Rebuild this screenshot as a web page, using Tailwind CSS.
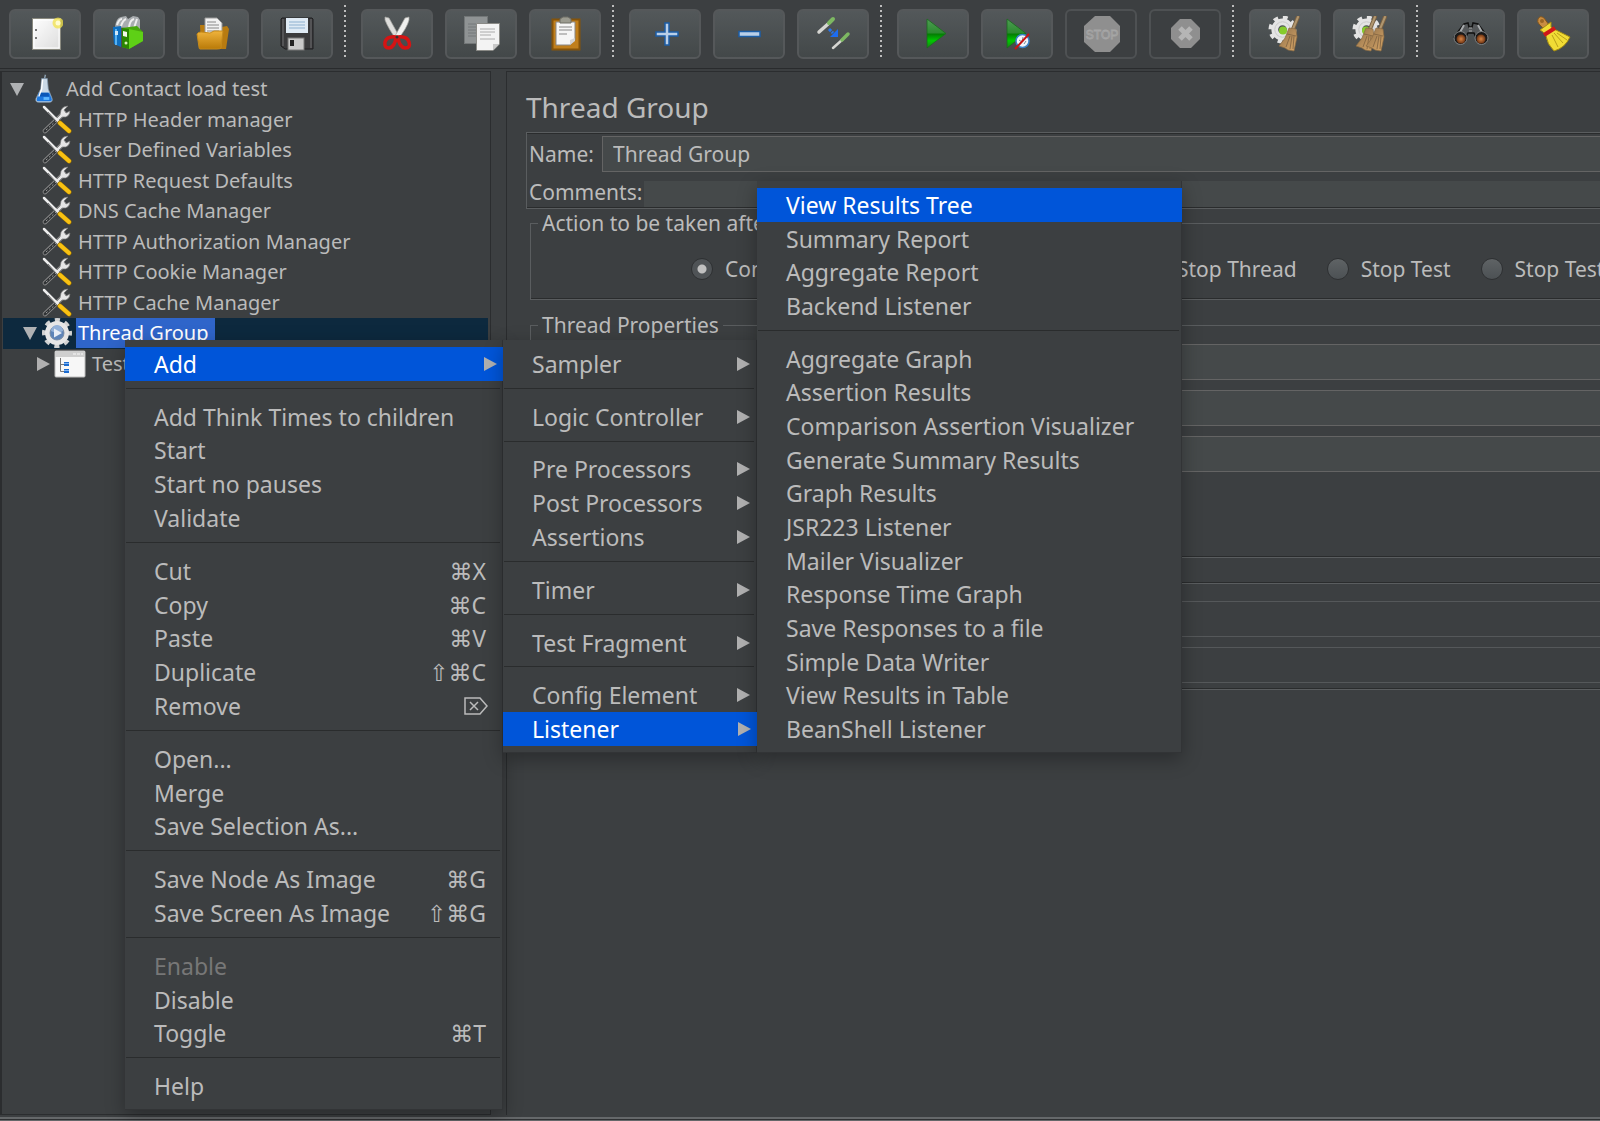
<!DOCTYPE html>
<html lang="en">
<head>
    <meta charset="UTF-8">
    <title>Add Contact load test</title>
    <meta name="viewport" content="width=device-width, initial-scale=1.0" />
    <script src="https://cdn.jsdelivr.net/npm/@tailwindcss/browser@4"></script>
</head>
<body class="relative flex flex-col h-screen overflow-hidden bg-[#3c3f41] text-[#bbbbbb] font-['Noto_Sans','DejaVu_Sans',sans-serif]">

    <!-- shared drawings -->
    <svg class="absolute w-0 h-0">
        <defs>
            <linearGradient id="paper" x1="0" y1="0" x2="1" y2="1"><stop offset="0" stop-color="#fff"/><stop offset="1" stop-color="#dcdcdc"/></linearGradient>
            <linearGradient id="orange" x1="0" y1="0" x2="0" y2="1"><stop offset="0" stop-color="#efb33c"/><stop offset="1" stop-color="#b97a08"/></linearGradient>
            <linearGradient id="green" x1="0" y1="0" x2="0" y2="1"><stop offset="0" stop-color="#4f9e55"/><stop offset=".48" stop-color="#2c8a2f"/><stop offset=".52" stop-color="#047d04"/><stop offset=".75" stop-color="#00c800"/><stop offset="1" stop-color="#1b7d1b"/></linearGradient>
            <linearGradient id="straw" x1="0" y1="0" x2="1" y2="1"><stop offset="0" stop-color="#8f6f4a"/><stop offset="1" stop-color="#d9a868"/></linearGradient>
            <radialGradient id="lens"><stop offset="0" stop-color="#d98645"/><stop offset="1" stop-color="#6d3312"/></radialGradient>
            <symbol id="gear" viewBox="0 0 30 30">
                <circle cx="15" cy="15" r="12" fill="none" stroke="#e4e4e4" stroke-width="5" stroke-dasharray="4.7 4.725"/>
                <circle cx="15" cy="15" r="8" fill="none" stroke="#e4e4e4" stroke-width="7"/>
                <circle cx="15" cy="15" r="8" fill="none" stroke="#c9c9c9" stroke-width="1"/>
            </symbol>
            <symbol id="whisk" viewBox="0 0 22 36">
                <path d="M20 1L15 13" stroke="#7a6142" stroke-width="4" stroke-linecap="round"/>
                <path d="M20 1L15 13" stroke="#b0966f" stroke-width="2" stroke-linecap="round"/>
                <path d="M11 12L18 13L19 21L16 35L10 34L7 32L1 30L7 22Z" fill="url(#straw)" stroke="#8a6a42" stroke-width=".7"/>
                <path d="M9 18L18 20M12 20L8 31M14 20L12 33M16 20L15 33" stroke="#7d6140" stroke-width=".8" fill="none"/>
            </symbol>
            <symbol id="tools" viewBox="0 0 30 30">
                <path d="M3 26L22 8" stroke="#8b8b8b" stroke-width="4.500" stroke-linecap="round"/>
                <path d="M3 26L17 13" stroke="#303335" stroke-width="3" stroke-linecap="round"/>
                <path d="M4 25L14 16" stroke="#9a9a9a" stroke-width="1" stroke-dasharray="2 2"/>
                <path d="M18 10L19 5Q21 1 26 1L22 5L24 8L28 6Q28 10 24 12L20 12L16 16L14 14Z" fill="#e6e6e6" stroke="#777" stroke-width=".7"/>
                <path d="M2 2L16 16" stroke="#eeeeee" stroke-width="2.500" stroke-linecap="round"/>
                <path d="M6 7L14 16" stroke="#777" stroke-width="1"/>
                <path d="M18 18L27 26" stroke="#9c7200" stroke-width="5" stroke-linecap="round"/>
                <path d="M18 18L27 26" stroke="#f8c112" stroke-width="4" stroke-linecap="round"/>
            </symbol>
            <symbol id="flask" viewBox="0 0 20 30">
                <path d="M11 0L10 4" stroke="#8ba0b0" stroke-width="1.500"/>
                <path d="M7 4H13L14 15L18 25Q19 29 15 29H4Q0 29 1 25L6 15Z" fill="#c9d8e6" stroke="#7c93a8" stroke-width=".8"/>
                <path d="M4 19H15L17.500 25Q18.500 28 15 28H4Q1 28 2 25Z" fill="#1c78e0"/>
                <path d="M5 19H14L15 23H4Z" fill="#0a57b8"/>
                <path d="M8 5L7 15L4 23" stroke="#fff" stroke-width="1.500" fill="none"/>
                <path d="M9 25H15" stroke="#5db7ff" stroke-width="3"/>
            </symbol>
            <symbol id="threads" viewBox="0 0 30 30">
                <circle cx="15" cy="15" r="12.500" fill="none" stroke="#d2d2d2" stroke-width="5" stroke-dasharray="4.9 4.917" stroke-dashoffset="2.450"/>
                <circle cx="15" cy="15" r="9.500" fill="none" stroke="#e6e6e6" stroke-width="5"/>
                <circle cx="15" cy="15" r="7" fill="#5d84b8" stroke="#8194ad"/>
                <path d="M9 13A6 6 0 0 1 21 13Q15 16 9 13" fill="#93b1d8"/>
                <path d="M12 10.500L20 15L12 19.500Z" fill="#e8eef6"/>
            </symbol>
            <symbol id="plan" viewBox="0 0 32 30">
                <rect x="1" y="2" width="30" height="26" rx="1" fill="#f7f7f7" stroke="#bdbdbd"/>
                <path d="M1 2H31V8H1Z" fill="#cfcfcf"/>
                <path d="M19 5H22M23 5H26M27 5H29" stroke="#e4e4e4" stroke-width="2"/>
                <path d="M6.500 9V22.500H10M6.500 15.500H10" stroke="#777" fill="none"/>
                <path d="M10 13H15V17H10ZM10 20H15V24H10Z" fill="#1d6cd0"/>
                <path d="M10 14.500H15M10 21.500H15" stroke="#7fb4f3"/>
            </symbol>
        </defs>
    </svg>

    <!-- toolbar -->
    <header id="toolbar" class="flex shrink-0 items-start h-[69px] pl-[9px] pt-[9px] border-b border-[#292b2d]">
        <div class="group flex gap-3">
            <button aria-label="New"><svg viewBox="0 0 36 36"><rect x="5.500" y="2.500" width="28" height="31" fill="url(#paper)" stroke="#8a8a80"/><rect x="7" y="4" width="25" height="28" fill="none" stroke="#fff"/><path d="M8 14h2M8 22h2" stroke="#777" stroke-width="2"/><circle cx="31" cy="7" r="5.500" fill="#f3e34a" fill-opacity=".75"/><circle cx="31" cy="7" r="2.500" fill="#fffcd0"/></svg></button>
            <button aria-label="Templates"><svg viewBox="0 0 36 36"><path d="M4 11Q5 2 10 1L15 0L17 3L22 0L27 1L29 4V14L15 12Z" fill="#a9adb0"/><path d="M6 9Q8 3 11 3M10 10Q12 4 15 3M18 11Q19 4 23 3M23 12L26 3" stroke="#eee" stroke-width="2" fill="none"/><path d="M2 11L10 10V31L3 28Q2 20 2 11Z" fill="#0f6fc0"/><path d="M5 13V29" stroke="#58b2f2" stroke-width="2"/><path d="M4 15H7V19H4Z" fill="#cfe8fa"/><path d="M11 12L26 10L32 16V25L18 33L11 31Z" fill="#47a80c"/><path d="M11 12L18 13V33L11 31Z" fill="#2b8600"/><path d="M18 13L32 16V25L18 33Z" fill="#5ed016"/><path d="M12 15L16 16V21L12 20Z" fill="#f3f8ea"/><circle cx="15" cy="27" r="1.500" fill="#d9f3bb"/></svg></button>
            <button aria-label="Open"><svg viewBox="0 0 36 36"><path d="M5 9H13L16 13L32 10L34 13L31 33H6Z" fill="#b87b10"/><path d="M10 2H22L27 7V20H10Z" fill="#f2f2f2" stroke="#999"/><path d="M12 6H21M12 9H24M12 12H24M12 15H24" stroke="#888"/><path d="M2 18Q3 16 6 16L15 17L19 15H28L26 32Q25 33 22 33H5Q4 33 4 31Z" fill="url(#orange)" stroke="#c58a1b"/></svg></button>
            <button aria-label="Save"><svg viewBox="0 0 36 36"><path d="M3 2H33L34 3V33H6L2 30V3Z" fill="#3a3a3c" stroke="#1f1f20"/><path d="M4 3V30M32 3V32" stroke="#6e6e70"/><rect x="7" y="2" width="22" height="15" fill="#dfeaf4"/><path d="M10 6H26M10 9H26M10 12H26" stroke="#8db0cf"/><rect x="9" y="22" width="16" height="12" fill="#c9c9c9" stroke="#777"/><rect x="11" y="24" width="4" height="6" fill="#222"/></svg></button>
        </div>
        <i></i>
        <div class="group flex gap-3">
            <button aria-label="Cut"><svg viewBox="0 0 36 36"><path d="M6 1L10 2L20 20L17 23Q9 12 6 4Z" fill="#dededc" stroke="#a5a5a0" stroke-width=".7"/><path d="M30 1L26 2L16 20L19 23Q28 12 30 4Z" fill="#f0f0ee" stroke="#a5a5a0" stroke-width=".7"/><path d="M17 21Q8 20 6 26Q5 32 10 32Q16 31 17 21ZM19 21Q28 20 30 26Q32 32 26 32Q20 31 19 21Z" fill="none" stroke="#d41414" stroke-width="3.500"/><circle cx="18" cy="21" r="1.500" fill="#333"/></svg></button>
            <button aria-label="Copy"><svg viewBox="0 0 36 36" overflow="visible"><rect x="1.500" y=".5" width="23" height="27" fill="#8f9394" stroke="#737778"/><path d="M5 8H20M5 11H20M5 14H20M5 17H20M5 20H20" stroke="#74787a"/><path d="M13.500 7.500H36.500V28L30 34.500H13.500Z" fill="#f3f3f3" stroke="#8a8a86"/><path d="M17 13H32M17 16H32M17 19H28M17 23H32" stroke="#aaa"/><path d="M30 34V28H36Z" fill="#c8c8c8"/></svg></button>
            <button aria-label="Paste"><svg viewBox="0 0 36 36"><rect x="5.500" y="3.500" width="27" height="30" fill="#c07f1c" stroke="#85540b" stroke-width="2"/><path d="M9 6H28V24L23 29H9Z" fill="#f6f6f6" stroke="#888"/><path d="M12 11H25M12 14H25M12 18H20" stroke="#888"/><path d="M23 29V24L28 22V25Z" fill="#d3d3d3"/><path d="M13 7V3L16 1H21L24 3V7Z" fill="#9b9b90" stroke="#6e6e66"/></svg></button>
        </div>
        <i></i>
        <div class="group flex gap-3">
            <button aria-label="Expand All"><svg viewBox="0 0 36 36"><path d="M18 7H22V16H31V20H22V29H18V20H9V16H18Z" fill="#b9cfe8" stroke="#1c5ea6" stroke-width="1.500"/></svg></button>
            <button aria-label="Collapse All"><svg viewBox="0 0 36 36"><rect x="8" y="15.500" width="21" height="5" fill="#b9cfe8" stroke="#1c5ea6" stroke-width="1.500"/></svg></button>
            <button aria-label="Toggle"><svg viewBox="0 0 36 36"><path d="M4 16L13 8" stroke="#d6d6d2" stroke-width="3.500" stroke-linecap="round"/><path d="M14 7L18 3" stroke="#7db862" stroke-width="4" stroke-linecap="round"/><path d="M18 32L27 24" stroke="#d6d6d2" stroke-width="2.500" stroke-linecap="round"/><path d="M27 24L33 18" stroke="#7db862" stroke-width="3.500" stroke-linecap="round"/><path d="M14 13L18 17" stroke="#2a74e8" stroke-width="3" stroke-dasharray="3 1"/><path d="M23 13V21H15Z" fill="#1d6cf0"/></svg></button>
        </div>
        <i></i>
        <div class="group flex gap-3">
            <button aria-label="Start"><svg viewBox="0 0 36 36"><path d="M12 3L31 17.500L12 32Z" fill="url(#green)" stroke="#1b6b1d" stroke-width=".8"/></svg></button>
            <button aria-label="Start no pauses"><svg viewBox="0 0 36 36"><path d="M8 3L27 17.500L8 32Z" fill="url(#green)" stroke="#1b6b1d" stroke-width=".8"/><circle cx="23.500" cy="25" r="6.500" fill="#f2f5fa" stroke="#3b82c8" stroke-width="1.500"/><path d="M20 24L23 26L24 21M25 28L27 25" stroke="#7d8792" fill="none"/><path d="M16 33L30 18" stroke="#c81414" stroke-width="2"/></svg></button>
            <button aria-label="Stop" disabled><svg viewBox="0 0 36 36" overflow="visible"><path d="M12 0H27L37 10V26L27 36H12L1 26V10Z" fill="#8f8f8f"/><text x="19" y="23" text-anchor="middle" font-family="Liberation Sans" font-size="12" fill="#8f8f8f" stroke="#a6a6a6" stroke-width=".8">STOP</text></svg></button>
            <button aria-label="Shutdown" disabled><svg viewBox="0 0 36 36"><path d="M13 3H24L33 12V23L24 32H13L4 23V12Z" fill="#8f8f8f"/><path d="M13 12L24 23M24 12L13 23" stroke="#b5b5b5" stroke-width="5"/></svg></button>
        </div>
        <i></i>
        <div class="group flex gap-3">
            <button aria-label="Clear"><svg viewBox="0 0 36 36"><use href="#gear" x="1" y="-1" width="29" height="29"/><circle cx="16" cy="14.500" r="4" fill="#86cc2c"/><use href="#whisk" x="11" y="0" width="22" height="36"/></svg></button>
            <button aria-label="Clear All"><svg viewBox="0 0 36 36"><use href="#gear" x="1" y="-1" width="29" height="29"/><circle cx="15" cy="14.500" r="4" fill="#86cc2c"/><use href="#whisk" x="4" y="0" width="22" height="36"/><use href="#whisk" x="14" y="0" width="22" height="36"/></svg></button>
        </div>
        <i></i>
        <div class="group flex gap-3">
            <button aria-label="Search"><svg viewBox="0 0 36 36" overflow="visible"><path d="M13 8L17 7L18 11H21L22 7L27 8L36 20L26 24L23 17H17L13 24L3 21Z" fill="#55585a" stroke="#111" stroke-width="1.500"/><path d="M13 9L8 18M27 9L32 18" stroke="#a8abad" stroke-width="2"/><path d="M18 12H21M18 15H21" stroke="#aaa"/><circle cx="9.500" cy="22" r="6.500" fill="#1a1a1a" stroke="#808385"/><circle cx="30.500" cy="22" r="6.500" fill="#1a1a1a" stroke="#808385"/><circle cx="10" cy="23" r="4.500" fill="url(#lens)"/><circle cx="30" cy="23" r="4.500" fill="url(#lens)"/></svg></button>
            <button aria-label="Reset Search"><svg viewBox="0 0 36 36" overflow="visible"><path d="M3 3Q5 -1 9 2L14 9L9 13L4 8Q2 6 3 3Z" fill="#c98d42" stroke="#87571c"/><circle cx="7" cy="5" r="2" fill="#9a6524"/><path d="M5 14L16 6V11L19 13L35 21Q30 32 19 35Q12 28 11 20L8 16Z" fill="#f1dc35" stroke="#a38b11"/><path d="M19 17L28 27M17 19L23 31M22 17L32 24" stroke="#b9a01a"/><path d="M9 19L20 12" stroke="#d01818" stroke-width="4"/></svg></button>
        </div>
    </header>

    <main class="flex flex-1 gap-[15px] min-h-0 pt-[2px] pb-[6px]">
        <!-- test plan tree -->
        <nav class="w-[491px] shrink-0 border border-l-2 border-[#2b2d2f] pl-px pr-[2px] pt-[2px]">
            <ul id="tree" role="tree" class="grid auto-rows-fr h-[305px] text-[20px] leading-[30px]"></ul>
        </nav>

        <!-- element settings -->
        <section class="flex-1 min-w-0 overflow-hidden border-t border-l border-[#2b2d2f] pl-[19px] text-[21px] leading-[30px] whitespace-nowrap">
            <h1 class="mt-[15px] text-[28px] leading-[40px]">Thread Group</h1>
            <div class="mt-[5px] border border-r-0 border-[#5a5d5f] shadow-[inset_0_-1px_0_#2a2c2d,inset_0_1px_0_#2a2c2d] pl-[2px] pt-[3px]">
                <div class="flex items-center">
                    <label for="name" class="w-[73px]">Name:</label>
                    <input id="name" value="Thread Group" class="flex-1 min-w-0 h-[36px] pl-[10px] bg-[#45494a] border border-r-0 border-[#646464]">
                </div>
                <div class="flex items-end h-[36px] pb-px">
                    <label for="comments" class="w-[115px]">Comments:</label>
                    <input id="comments" class="flex-1 min-w-0 h-[26px] bg-[#45494a]">
                </div>
            </div>
            <fieldset class="ml-1 h-[91px] border border-r-0 border-[#5a5d5f] shadow-[inset_0_-1px_0_#2a2c2d] pl-[160px]">
                <legend class="-ml-[153px] px-1 leading-[28px]">Action to be taken after a Sampler error</legend>
                <div class="flex gap-[30px] pt-[17px]">
                    <label class="flex items-center gap-3 w-[130px]"><input type="radio" name="act" checked>Continue</label>
                    <div class="flex items-center w-[262px]"><input type="radio" name="act" aria-label="Start Next Thread Loop"></div>
                    <label class="flex items-center gap-3"><input type="radio" name="act">Stop Thread</label>
                    <label class="flex items-center gap-3"><input type="radio" name="act">Stop Test</label>
                    <label class="flex items-center gap-3"><input type="radio" name="act">Stop Test Now</label>
                </div>
            </fieldset>
            <fieldset class="mt-[11px] ml-1 border-t border-l border-[#5a5d5f]">
                <legend class="ml-[7px] px-1 leading-[28px]">Thread Properties</legend>
                <div class="grid gap-[10px] pt-[5px] pl-[300px]">
                    <input aria-label="Number of Threads (users)" class="min-w-0 h-[36px] bg-[#45494a] border border-r-0 border-[#646464]">
                    <input aria-label="Ramp-Up Period (in seconds)" class="min-w-0 h-[36px] bg-[#45494a] border border-r-0 border-[#646464]">
                    <input aria-label="Loop Count" class="min-w-0 h-[36px] bg-[#45494a] border border-r-0 border-[#646464]">
                </div>
                <div class="h-[86px] border-b border-[#5a5d5f] shadow-[inset_0_-1px_0_#2a2c2d]"></div>
                <!-- scheduler -->
                <div class="mt-[25px] grid gap-[10px] pt-[17px] pl-[300px] pb-[6px] border border-r-0 border-[#5a5d5f] shadow-[0_-1px_0_#2a2c2d,inset_0_-1px_0_#2a2c2d]">
                    <input aria-label="Duration (seconds)" disabled class="min-w-0 h-[36px] border border-r-0 border-[#55585a]">
                    <input aria-label="Startup delay (seconds)" disabled class="min-w-0 h-[36px] border border-r-0 border-[#55585a]">
                </div>
            </fieldset>
        </section>
    </main>
    <div class="absolute bottom-0 inset-x-0 h-1 border-t-2 border-b border-[#65686a] bg-[#2f3133]"></div>

    <!-- popup menus -->
    <div id="popup" role="menu" class="absolute left-[125px] top-[340px] w-[378px] h-[770px]"></div>
    <div id="add" role="menu" class="absolute left-[503px] top-[340px] w-[254px] h-[413px]"></div>
    <div id="listener" role="menu" class="absolute left-[757px] top-[181px] w-[425px] h-[572px]"></div>

</body>
<script>

    const tree = [
        [0, 'flask', 'Add Contact load test', 'open'],
        [1, 'tools', 'HTTP Header manager'],
        [1, 'tools', 'User Defined Variables'],
        [1, 'tools', 'HTTP Request Defaults'],
        [1, 'tools', 'DNS Cache Manager'],
        [1, 'tools', 'HTTP Authorization Manager'],
        [1, 'tools', 'HTTP Cookie Manager'],
        [1, 'tools', 'HTTP Cache Manager'],
        [1, 'threads', 'Thread Group', 'open'],
        [2, 'plan', 'Test', 'closed']
    ]

    // label, shortcut or '>' for a submenu; '-' is a separator
    const menus = {
        popup: [
            ['Add', '>'], '-',
            ['Add Think Times to children'], ['Start'], ['Start no pauses'], ['Validate'], '-',
            ['Cut', '⌘X'], ['Copy', '⌘C'], ['Paste', '⌘V'], ['Duplicate', '⇧⌘C'], ['Remove', 'del'], '-',
            ['Open...'], ['Merge'], ['Save Selection As...'], '-',
            ['Save Node As Image', '⌘G'], ['Save Screen As Image', '⇧⌘G'], '-',
            ['Enable'], ['Disable'], ['Toggle', '⌘T'], '-',
            ['Help']
        ],
        add: [
            ['Sampler', '>'], '-', ['Logic Controller', '>'], '-',
            ['Pre Processors', '>'], ['Post Processors', '>'], ['Assertions', '>'], '-',
            ['Timer', '>'], '-', ['Test Fragment', '>'], '-',
            ['Config Element', '>'], ['Listener', '>']
        ],
        listener: [
            ['View Results Tree'], ['Summary Report'], ['Aggregate Report'], ['Backend Listener'], '-',
            ['Aggregate Graph'], ['Assertion Results'], ['Comparison Assertion Visualizer'],
            ['Generate Summary Results'], ['Graph Results'], ['JSR223 Listener'], ['Mailer Visualizer'],
            ['Response Time Graph'], ['Save Responses to a file'], ['Simple Data Writer'],
            ['View Results in Table'], ['BeanShell Listener']
        ]
    }
    const active = ['Add', 'Listener', 'View Results Tree']

    const arrow = '<svg class="w-[13px] h-[14px] shrink-0" viewBox="0 0 13 14"><path d="M0 0L13 7L0 14Z" fill="#b0b0b0"/></svg>'
    const opened = '<svg class="w-[14px] h-[13px] shrink-0" viewBox="0 0 14 13"><path d="M0 0H14L7 13Z" fill="#afb1b3"/></svg>'
    const del = '<svg class="w-[24px] h-[18px]" viewBox="0 0 24 18" overflow="visible" fill="none" stroke="#bbbbbb" stroke-width="1.5"><path d="M1 1H16L23 9L16 17H1Z"/><path d="M6 5L14 13M14 5L6 13"/></svg>'

    // tree rows
    const pads = ['pl-[7px]', 'pl-[20px]', 'pl-[34px]']
    const icons = { flask: 'w-[19px] ml-[11px] mr-[11px]', tools: 'w-[30px] mx-[5px]', threads: 'w-[30px] mx-[5px]', plan: 'w-[32px] ml-[4px] mr-[5px]' }
    document.getElementById('tree').innerHTML = tree.map(([depth, icon, label, state]) => {
        const selected = label == 'Thread Group'
        const toggle = state == 'open' ? opened : state == 'closed' ? arrow : '<span class="w-[14px]"></span>'
        return `<li role="treeitem" class="flex items-center ${pads[depth]} ${selected ? 'bg-[#0d293e] text-white' : ''}">
            ${toggle}<svg class="h-[30px] shrink-0 ${icons[icon]}"><use href="#${icon}"/></svg>
            <span class="${selected ? 'bg-[#2f65ca] pl-[2px] pr-[6px] -ml-px' : 'pl-px'}">${label}</span></li>`
    }).join('')

    // menus
    Object.keys(menus).forEach(id => {
        const menu = document.getElementById(id)
        menu.classList.add(...'flex flex-col pt-[7px] pb-[6px] bg-[#3c3f41] border-r border-b border-[#323436] shadow-[0_6px_18px_rgba(0,0,0,0.3)]'.split(' '))
        menu.innerHTML = menus[id].map(item => {
            if (item == '-') return '<div role="separator" class="shrink-0 h-[19px] pt-[7px] pl-px pr-[2px]"><hr class="border-[#2a2c2d]"></div>'
            const [label, key] = item
            const on = active.includes(label)
            return `<button role="menuitem" ${label == 'Enable' ? 'disabled' : ''} class="flex-1 min-h-0 flex items-center justify-between pl-[29px] ${key == '>' ? 'pr-[6px]' : key == 'del' ? 'pr-[14px]' : 'pr-[16px]'} text-[23px] leading-[32px] disabled:text-[#777777] ${on ? 'bg-[#0055d9] text-white -mr-px' : ''}">
                <span>${label}</span>${key == '>' ? arrow : key == 'del' ? del : key ? `<kbd class="font-['Noto_Sans','DejaVu_Sans',sans-serif]">${key}</kbd>` : ''}</button>`
        }).join('')
    })

    // toolbar buttons and dotted separators
    document.querySelectorAll('#toolbar button').forEach(b => {
        b.className = 'flex items-center justify-center w-[72px] h-[50px] rounded-md border-2 border-[#55585a] bg-linear-to-b from-[#53585a] to-[#434849] disabled:from-[#3c3f41] disabled:to-[#3c3f41] disabled:border-[#4e5153]'
        b.firstElementChild.setAttribute('class', 'w-9 h-9')
    })
    document.querySelectorAll('#toolbar i').forEach(i => {
        i.className = 'w-[28px] h-[54px] -mt-1 pl-[11px] after:block after:w-[2px] after:h-[52px] after:bg-[repeating-linear-gradient(to_bottom,#bdbdbd_0_2px,transparent_2px_5px)]'
    })

    document.querySelectorAll('input[type=radio]').forEach(r => {
        r.className = 'appearance-none shrink-0 w-[22px] h-[22px] rounded-full border border-[#2e3032] bg-linear-to-b from-[#5f6365] to-[#4c5154] checked:bg-[radial-gradient(circle,#c0c0c0_0_4px,#4f5356_5px)]'
    })

</script>
</html>
